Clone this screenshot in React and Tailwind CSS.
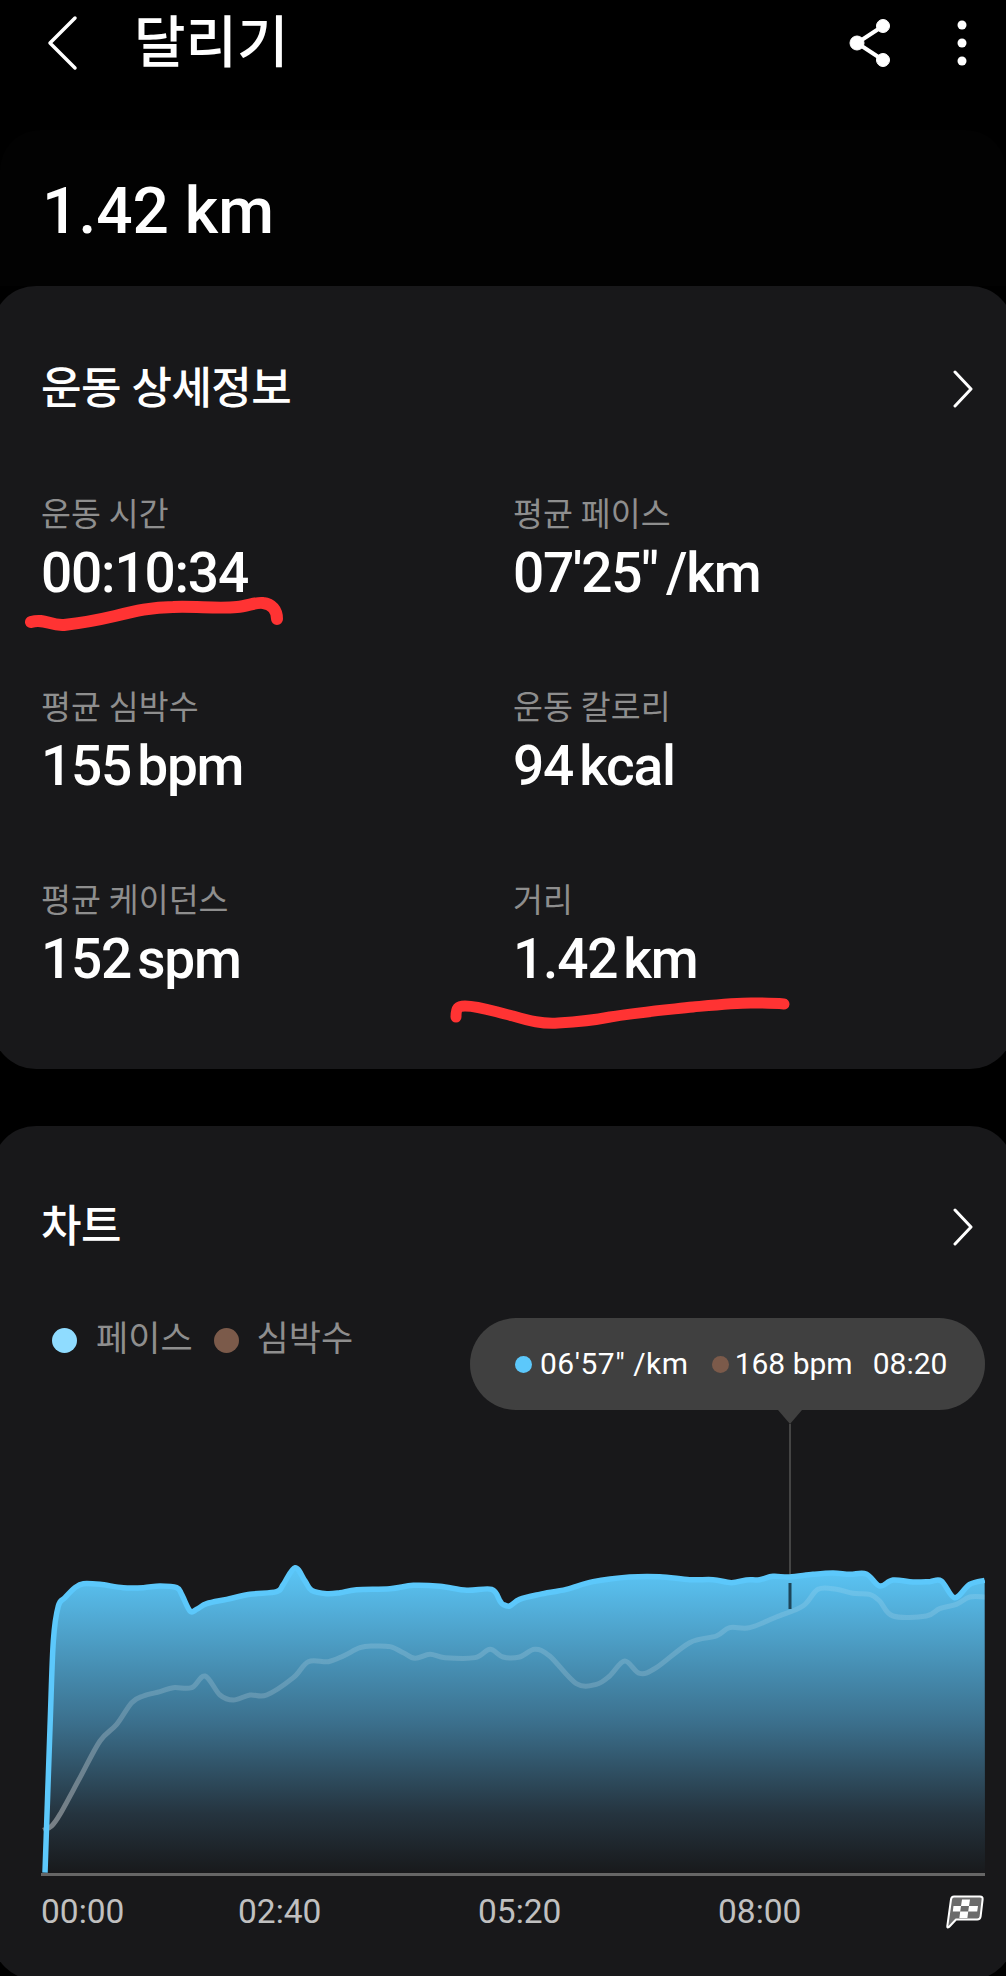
// Workout detail screen: summary, stats and pace / heart rate chart
const FONT = "font-['Roboto','Noto_Sans_CJK_KR',sans-serif]";

// traced from the reference, in crop coordinates (3x, cropped at y=1540)
const pacePoints = [
  [135, 995], [150, 560], [160, 300], [175, 195], [195, 170], [225, 140], [250, 128], [300, 130], [370, 140], [430, 140],
  [480, 135], [530, 140], [545, 160], [570, 210], [590, 205], [620, 188], [680, 175], [750, 160], [830, 152],
  [850, 130], [885, 80], [915, 120], [935, 148], [980, 158], [1020, 155], [1070, 146], [1170, 143], [1240, 133],
  [1320, 136], [1400, 148], [1475, 145], [1500, 180], [1509, 190], [1529, 195], [1559, 175], [1619, 160], [1699, 145],
  [1779, 122], [1889, 108], [1979, 107], [2069, 116], [2139, 116], [2194, 125], [2239, 117], [2279, 116],
  [2319, 106], [2369, 108], [2439, 100], [2499, 96], [2549, 100], [2599, 99], [2639, 135], [2679, 117],
  [2739, 123], [2789, 122], [2824, 120], [2864, 170], [2909, 130], [2954, 118],
];

const heartPoints = [
  [130, 868], [155, 855], [180, 820], [240, 710], [300, 600], [350, 550], [395, 485], [430, 465], [480, 452],
  [520, 440], [575, 440], [615, 405], [660, 462], [700, 477], [750, 462], [800, 462], [880, 410], [925, 362],
  [985, 362], [1030, 345], [1080, 320], [1120, 315], [1170, 317], [1210, 335], [1245, 352], [1290, 340],
  [1335, 350], [1425, 350], [1470, 325], [1509, 348], [1559, 348], [1604, 325], [1649, 345], [1729, 428],
  [1789, 430], [1829, 405], [1874, 360], [1919, 397], [1969, 380], [2069, 305], [2149, 285], [2189, 260],
  [2249, 260], [2329, 228], [2409, 195], [2454, 145], [2509, 145], [2559, 157], [2609, 160], [2639, 180],
  [2679, 225], [2779, 225], [2819, 203], [2869, 190], [2909, 168], [2954, 168],
];

const toPage = ([x, y]) => [x / 3, 1540 + y / 3];

const smoothPath = (raw) => {
  const pts = raw.map(toPage);
  let d = `M${pts[0][0]} ${pts[0][1]}`;
  for (let i = 0; i < pts.length - 1; i++) {
    const p0 = pts[i - 1] || pts[i];
    const p1 = pts[i];
    const p2 = pts[i + 1];
    const p3 = pts[i + 2] || p2;
    const c1 = [p1[0] + (p2[0] - p0[0]) / 6, p1[1] + (p2[1] - p0[1]) / 6];
    const c2 = [p2[0] - (p3[0] - p1[0]) / 6, p2[1] - (p3[1] - p1[1]) / 6];
    d += `C${c1[0]} ${c1[1]} ${c2[0]} ${c2[1]} ${p2[0]} ${p2[1]}`;
  }
  return d;
};

const paceLine = smoothPath(pacePoints);
const heartLine = smoothPath(heartPoints);

const stats = [
  { label: "운동 시간", value: "00:10:34" },
  { label: "평균 페이스", value: "07'25\" /km" },
  { label: "평균 심박수", value: "155", unit: "bpm" },
  { label: "운동 칼로리", value: "94", unit: "kcal" },
  { label: "평균 케이던스", value: "152", unit: "spm" },
  { label: "거리", value: "1.42", unit: "km" },
];

const Chevron = () => (
  <svg width="22" height="38" viewBox="0 0 22 38" fill="none" stroke="white" strokeWidth="3" strokeLinecap="round" strokeLinejoin="round">
    <path d="M3 2l16 17L3 36" />
  </svg>
);

const SectionTitle = ({ children }) => (
  <div className="flex h-[60px] items-center justify-between pr-[32px]">
    <h2 className="text-[44px] leading-[60px] font-medium tracking-[-0.5px] text-white">{children}</h2>
    <Chevron />
  </div>
);

const FlagIcon = () => (
  <svg width="38" height="34" viewBox="0 0 38 34">
    <path d="M8 1.500h26q3 0 2.600 3l-2 17q-.4 3-3.400 3H10L3 32q-2 1.500-1.700-1L5 4.500Q5.400 1.500 8 1.500z" fill="#6b6b6b" stroke="white" strokeWidth="2" strokeLinejoin="round" />
    <path d="M16 4.500h8l-1 6.500h-8zM7.500 11h7.500l-.8 5.500H6.800zM23 11h9l-.8 5.500h-9zM14.200 16.500h8L21.400 23h-8z" fill="white" />
  </svg>
);

export default function App() {
  return (
    <div className={`${FONT} h-[1976px] w-[1006px] overflow-hidden bg-black text-white`}>
      <header className="flex h-[86px] items-center pr-[39px] pl-[46px]">
        <svg width="32" height="56" viewBox="0 0 32 56" fill="none" stroke="white" strokeWidth="3.500" strokeLinecap="round" strokeLinejoin="round">
          <path d="M29 3L4 28l25 25" />
        </svg>
        <h1 className="ml-[56px] text-[56px] leading-[60px] font-medium">달리기</h1>
        <div className="ml-auto flex items-center gap-[65px]">
          <svg width="44" height="50" viewBox="0 0 44 50" fill="white" stroke="white">
            <circle cx="35" cy="8" r="6.500" />
            <circle cx="9" cy="25" r="7" />
            <circle cx="35" cy="42" r="6.500" />
            <path d="M35 8L9 25l26 17" fill="none" strokeWidth="4" />
          </svg>
          <svg width="10" height="46" viewBox="0 0 10 46" fill="white">
            <circle cx="5" cy="5" r="4.500" />
            <circle cx="5" cy="23" r="4.500" />
            <circle cx="5" cy="41" r="4.500" />
          </svg>
        </div>
      </header>

      <section className="mt-[44px] flex h-[156px] items-center rounded-t-[40px] bg-[#020202] pt-[8px] pl-[42px]">
        <p className="text-[64px] leading-[70px] font-medium">1.42 km</p>
      </section>

      {/* the cards run a little past the screen edge */}
      <section className="relative -mx-[8px] rounded-[44px] bg-[#18181a] pt-[73px] pr-[8px] pb-[78px] pl-[49px]">
        <SectionTitle>운동 상세정보</SectionTitle>
        <div className="mt-[76px] grid grid-cols-[472px_1fr] gap-y-[83px]">
          {stats.map((s) => (
            <div key={s.label} className="h-[110px]">
              <p className="text-[32.500px] leading-[40px] text-[#8e8e8e]">{s.label}</p>
              <p className="mt-[6px] text-[55px] leading-[64px] font-medium tracking-[-1.200px] [word-spacing:-4px]">
                {s.value}
                {s.unit && <span className="ml-[6px]">{s.unit}</span>}
              </p>
            </div>
          ))}
        </div>

        {/* pen marks drawn over the screenshot */}
        <svg className="pointer-events-none absolute top-0 left-[8px]" width="1006" height="782" viewBox="0 286 1006 782" fill="none" stroke="#ff3333" strokeLinecap="round" strokeLinejoin="round">
          <path d="M31 622C45 618 50 626 64 625C82 623 98 620 115 616C135 611 152 607 173 607C195 606 218 609 237 607C248 606 256 602 263 603C272 604 277 610 277 619" strokeWidth="12" />
          <path d="M456 1017C456 1008 458 1006 465 1006C480 1006 495 1012 513 1016C530 1021 542 1024 558 1023C576 1022 590 1021 610 1017C640 1012 665 1010 693 1007C715 1005 735 1003 751 1003C762 1003 772 1003 784 1004" strokeWidth="11" />
        </svg>
      </section>

      <section className="relative -mx-[8px] mt-[57px] rounded-[44px] bg-[#18181a] pt-[71px] pb-[48px]">
        <div className="pr-[8px] pl-[49px]">
          <SectionTitle>차트</SectionTitle>
        </div>

        <div className="mt-[63px] flex h-[40px] items-center pl-[60px] text-[35px] leading-[40px] text-[#8e8e8e]">
          <span className="h-[25px] w-[25px] rounded-full bg-[#8fdcff]" />
          <span className="ml-[19px]">페이스</span>
          <span className="ml-[21px] h-[25px] w-[25px] rounded-full bg-[#7b5a4a]" />
          <span className="ml-[18px]">심박수</span>
        </div>

        <div className="absolute top-[192px] right-[29px] flex h-[92px] w-[515px] items-center rounded-[46px] bg-[#404040] pl-[45px] text-[30px] leading-[36px] text-white">
          <span className="h-[17px] w-[17px] rounded-full bg-[#5cc8fb]" />
          <span className="ml-[8px] tracking-[0.500px]">06'57" /km</span>
          <span className="ml-[23px] h-[17px] w-[17px] rounded-full bg-[#7b5a4a]" />
          <span className="ml-[6px]">168 bpm</span>
          <span className="ml-[20px]">08:20</span>
        </div>

        <svg className="mt-[41px] ml-[8px] block" width="1006" height="476" viewBox="0 1400 1006 476">
          <defs>
            <linearGradient id="paceFill" x1="0" y1="1572" x2="0" y2="1873" gradientUnits="userSpaceOnUse">
              <stop offset="0" stopColor="#5ac3f3" />
              <stop offset="0.5" stopColor="#3b6f8c" />
              <stop offset="0.8" stopColor="#25343f" />
              <stop offset="1" stopColor="#18191b" />
            </linearGradient>
            <linearGradient id="heartStroke" x1="0" y1="1580" x2="0" y2="1830" gradientUnits="userSpaceOnUse">
              <stop offset="0" stopColor="white" stopOpacity="0.12" />
              <stop offset="0.5" stopColor="white" stopOpacity="0.18" />
              <stop offset="1" stopColor="white" stopOpacity="0.4" />
            </linearGradient>
            <clipPath id="plotClip">
              <rect x="38" y="1400" width="947" height="473" />
            </clipPath>
          </defs>
          <path d="M778 1409h24l-12 14z" fill="#404040" />
          <rect x="789" y="1423" width="2" height="154" fill="#444444" />
          <g clipPath="url(#plotClip)">
            <path d={`${paceLine}L985 1873L45 1873Z`} fill="url(#paceFill)" />
            <path d={heartLine} fill="none" stroke="url(#heartStroke)" strokeWidth="5" strokeLinejoin="round" />
            <path d={paceLine} fill="none" stroke="#5cc8fb" strokeWidth="5.500" strokeLinejoin="round" />
          </g>
          <rect x="788.500" y="1582" width="3" height="26" fill="#1d4558" />
          <rect x="41" y="1872" width="944" height="3" fill="#666666" />
        </svg>

        <div className="mt-[15px] grid h-[40px] grid-cols-[197px_240px_240px_1fr] items-center pr-[8px] pl-[49px] text-[33.500px] leading-[40px] text-[#c0c0c0]">
          <span>00:00</span>
          <span>02:40</span>
          <span>05:20</span>
          <div className="flex items-center justify-between pr-[22px]">
            <span>08:00</span>
            <FlagIcon />
          </div>
        </div>
      </section>
    </div>
  );
}
